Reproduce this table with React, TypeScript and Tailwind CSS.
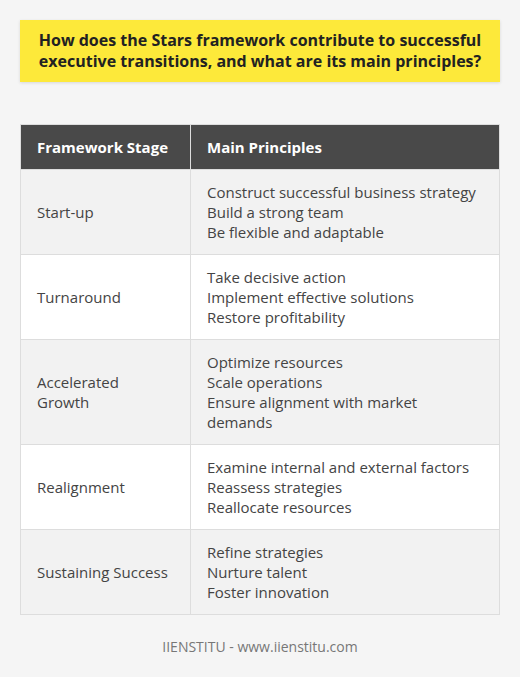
const rows: { stage: string; principles: string[] }[] = [
  {
    stage: "Start-up",
    principles: ["Construct successful business strategy", "Build a strong team", "Be flexible and adaptable"],
  },
  {
    stage: "Turnaround",
    principles: ["Take decisive action", "Implement effective solutions", "Restore profitability"],
  },
  {
    stage: "Accelerated Growth",
    principles: ["Optimize resources", "Scale operations", "Ensure alignment with market demands"],
  },
  {
    stage: "Realignment",
    principles: ["Examine internal and external factors", "Reassess strategies", "Reallocate resources"],
  },
  {
    stage: "Sustaining Success",
    principles: ["Refine strategies", "Nurture talent", "Foster innovation"],
  },
];

const App: React.FC = () => {
  return (
    <div className="min-h-[677px] w-[520px] bg-[#f5f5f5] px-5 pt-5 font-['Open_Sans',sans-serif]">
      <div className="bg-[#fde93a] px-2 py-[10px] shadow-[0_1px_3px_rgba(0,0,0,0.12)]">
        <h1 className="text-center text-[16px] font-bold leading-[21px] text-[#222]">
          How does the Stars framework contribute to successful executive transitions, and what are its main principles?
        </h1>
      </div>

      <table className="mt-[42px] w-[480px] table-fixed border-collapse text-[15px] leading-5">
        <thead>
          <tr className="bg-[#494949] text-white">
            <th className="w-[170px] border border-[#dddddd] px-4 py-3 text-left font-bold">Framework Stage</th>
            <th className="border border-[#dddddd] px-4 py-3 text-left font-bold">Main Principles</th>
          </tr>
        </thead>
        <tbody>
          {rows.map((row, i) => (
            <tr key={row.stage} className={i % 2 === 0 ? "bg-[#f2f2f2]" : "bg-white"}>
              <td className="border border-[#dddddd] px-4 py-3 align-middle text-[#444]">{row.stage}</td>
              <td className="border border-[#dddddd] px-4 py-3 align-middle text-[#444]">
                {row.principles.map((p) => (
                  <div key={p}>{p}</div>
                ))}
              </td>
            </tr>
          ))}
        </tbody>
      </table>

      <p className="mt-[22px] text-center text-[14px] leading-5 text-[#777]">IIENSTITU - www.iienstitu.com</p>
    </div>
  );
};

export default App;
